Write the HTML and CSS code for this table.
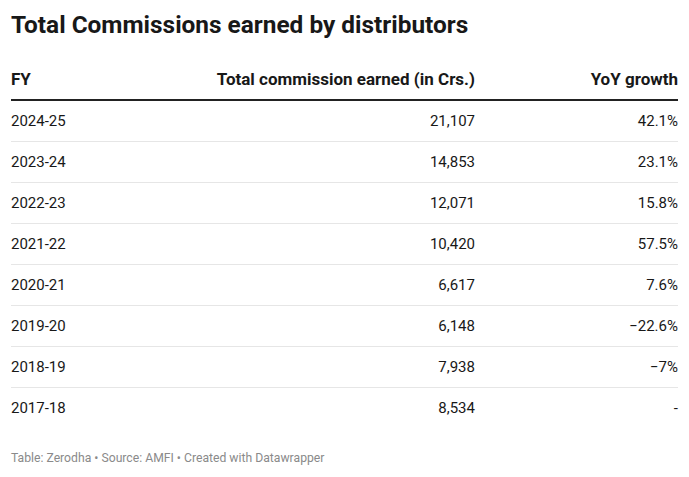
FILE: index.html
```html
<!DOCTYPE html>
<html>
<head>
<meta charset="utf-8">
<link rel="stylesheet" href="styles.css">
</head>
<body>
<div class="chart">
  <h1 class="title">Total Commissions earned by distributors</h1>
  <table class="data">
    <thead>
      <tr><th class="c-fy">FY</th><th class="c-num">Total commission earned (in Crs.)</th><th class="c-num">YoY growth</th></tr>
    </thead>
    <tbody>
      <tr><td>2024-25</td><td class="c-num">21,107</td><td class="c-num">42.1%</td></tr>
      <tr><td>2023-24</td><td class="c-num">14,853</td><td class="c-num">23.1%</td></tr>
      <tr><td>2022-23</td><td class="c-num">12,071</td><td class="c-num">15.8%</td></tr>
      <tr><td>2021-22</td><td class="c-num">10,420</td><td class="c-num">57.5%</td></tr>
      <tr><td>2020-21</td><td class="c-num">6,617</td><td class="c-num">7.6%</td></tr>
      <tr><td>2019-20</td><td class="c-num">6,148</td><td class="c-num">−22.6%</td></tr>
      <tr><td>2018-19</td><td class="c-num">7,938</td><td class="c-num">−7%</td></tr>
      <tr><td>2017-18</td><td class="c-num">8,534</td><td class="c-num">-</td></tr>
    </tbody>
  </table>
  <div class="footer">Table: Zerodha • Source: AMFI • Created with Datawrapper</div>
</div>
</body>
</html>
```
FILE: styles.css
```css
html, body { margin: 0; padding: 0; background: #fff; }
body { font-family: Roboto, "Liberation Sans", sans-serif; color: #181818; }
.chart { padding: 10px 11px 0 11px; }
.title { margin: 0; font-size: 24.4px; font-weight: 700; line-height: 30px; color: #181818; }
.data { width: 100%; border-collapse: collapse; margin-top: 24px; font-size: 15px; }
.data th { font-size: 17px; font-weight: 700; text-align: left; padding: 0 0 9px 0; height: 26px; border-bottom: 2px solid #222; vertical-align: bottom; line-height: 22px; }
.data td { height: 41px; padding: 1px 0 0 0; line-height: 20px; border-bottom: 1px solid #e6e6e6; vertical-align: middle; box-sizing: border-box; }
.data tbody tr:last-child td { border-bottom: none; }
.data .c-num { text-align: right; }
.data .c-fy { width: 200px; }
.data th.c-num:nth-child(2) { width: 264px; }
.footer { margin-top: 22px; font-size: 12.2px; color: #8a8a8a; line-height: 16px; }
```
